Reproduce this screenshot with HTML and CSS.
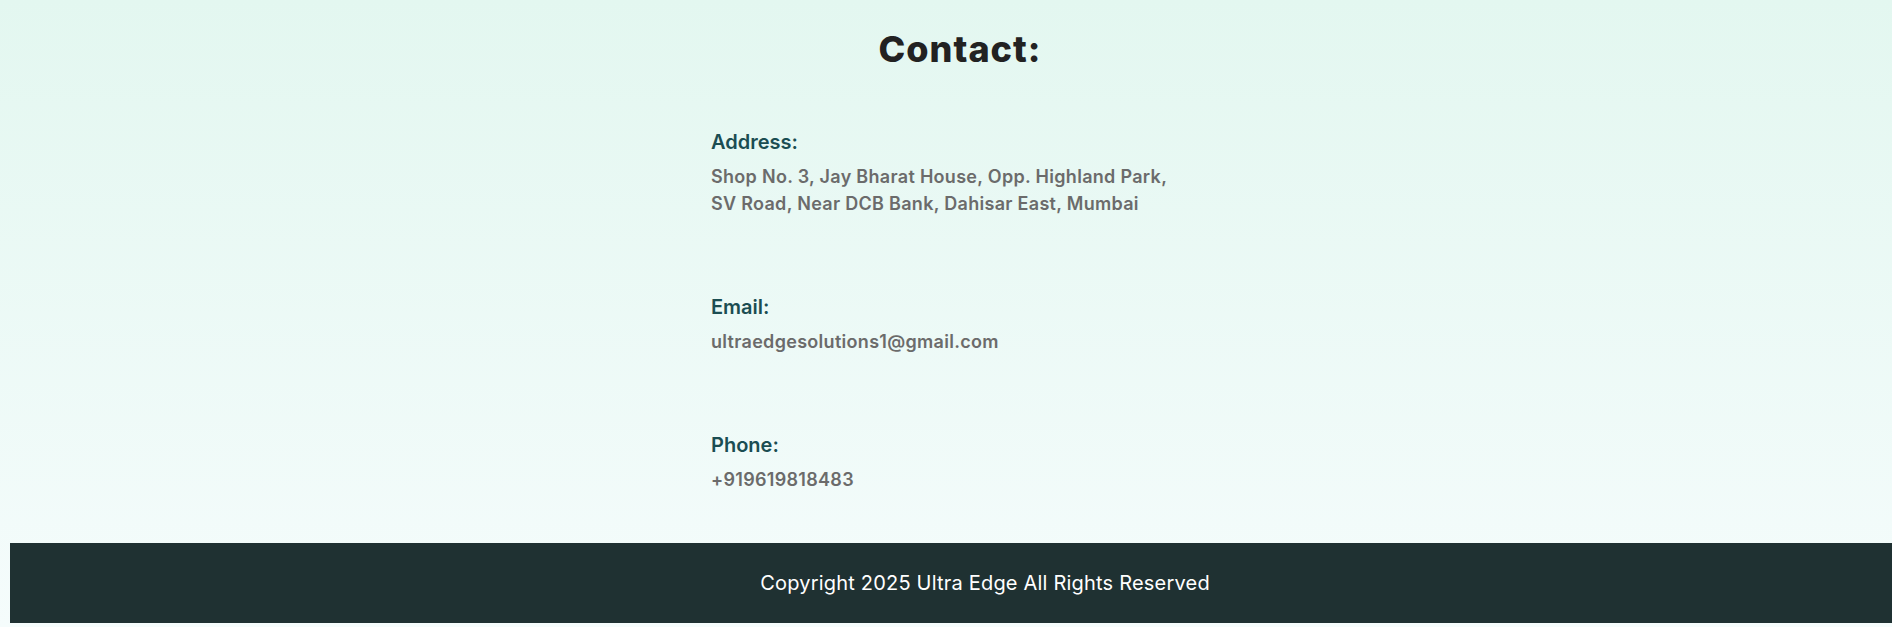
FILE: index.html
```html
<!DOCTYPE html>
<html lang="en">
<head>
<meta charset="utf-8">
<title>Contact</title>
<link rel="stylesheet" href="styles.css">
</head>
<body>
<main class="contact">
  <h1 class="contact-title">Contact:</h1>
  <div class="contact-list">
    <section class="contact-item">
      <h3 class="contact-label">Address:</h3>
      <p class="contact-value">Shop No. 3, Jay Bharat House, Opp. Highland Park,<br>SV Road, Near DCB Bank, Dahisar East, Mumbai</p>
    </section>
    <section class="contact-item">
      <h3 class="contact-label">Email:</h3>
      <p class="contact-value">ultraedgesolutions1@gmail.com</p>
    </section>
    <section class="contact-item">
      <h3 class="contact-label">Phone:</h3>
      <p class="contact-value">+919619818483</p>
    </section>
  </div>
</main>
<footer class="site-footer">
  <p class="footer-text">Copyright 2025 Ultra Edge All Rights Reserved</p>
</footer>
</body>
</html>
```

FILE: styles.css
```css
html, body {
  margin: 0;
  padding: 0;
}
body {
  min-height: 627px;
  background: linear-gradient(180deg, #e3f7f0 0%, #f5fcfc 100%);
  font-family: Inter, "Noto Sans", sans-serif;
  overflow: hidden;
}
.contact {
  padding-top: 27px;
}
.contact-title {
  margin: 0;
  padding-left: 28px;
  text-align: center;
  font-size: 36px;
  line-height: 44px;
  font-weight: 800;
  letter-spacing: 1px;
  color: #222222;
}
.contact-list {
  width: 470px;
  margin: 56px auto 0;
  display: flex;
  flex-direction: column;
  gap: 75px;
}
.contact-item {
  display: flex;
  flex-direction: column;
  gap: 6px;
}
.contact-label {
  margin: 0;
  font-size: 20px;
  line-height: 30px;
  font-weight: 600;
  color: #1b4d52;
}
.contact-value {
  margin: 0;
  font-size: 18px;
  line-height: 27px;
  font-weight: 600;
  letter-spacing: 0.3px;
  color: #6b6b6b;
}
.site-footer {
  margin: 50px 0 0 10px;
  padding: 25px 0 25px 68px;
  background: #1f3132;
  text-align: center;
}
.footer-text {
  margin: 0;
  font-size: 20px;
  line-height: 30px;
  font-weight: 400;
  letter-spacing: 0.2px;
  color: #ffffff;
}
```
